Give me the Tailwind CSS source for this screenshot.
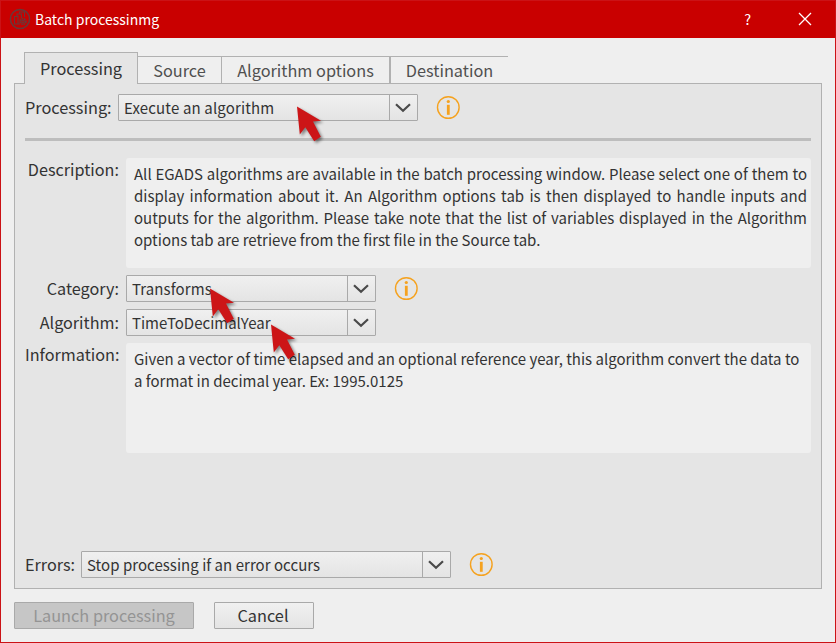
<!DOCTYPE html>
<html lang="en">
<head>
<meta charset="utf-8">
<title>Batch processinmg</title>
<script src="https://cdn.jsdelivr.net/npm/@tailwindcss/browser@4"></script>
</head>
<body class="w-[836px] h-[643px] overflow-hidden font-['Noto_Sans_CJK_SC','Noto_Sans',sans-serif] text-[#333]">
<svg class="hidden">
  <symbol id="chev" viewBox="0 0 16 10"><path d="M1 1.200 L8 7.800 L15 1.200" fill="none" stroke="#4a4a4a" stroke-width="2.200"/></symbol>
  <symbol id="info" viewBox="0 0 24 24"><circle cx="12.300" cy="11.500" r="10.800" fill="none" stroke="#f5a21f" stroke-width="1.400"/><rect x="10.900" y="8.800" width="2.800" height="10" fill="#f5a21f"/><circle cx="12.300" cy="5.500" r="1.600" fill="#f5a21f"/></symbol>
  <symbol id="ptr" viewBox="0 0 34 42"><path d="M1 0.500 L25 14.800 L17 15.600 L24.800 30.800 L18.200 35.300 L9.300 21.300 L3.800 28.500 Z" fill="#cc1517"/></symbol>
</svg>
<div class="relative w-[836px] h-[643px] flex flex-col bg-[#efefef] border border-[#cb1216]">
  <header class="h-[37px] shrink-0 bg-[#c90000] flex items-center text-white pl-[8px] pr-[23px] pb-[1px]">
    <svg class="w-[22px] h-[22px]" viewBox="0 0 22 22" fill="none" stroke="#663a3a" stroke-width="1.100"><circle cx="11" cy="11" r="9.600" stroke-width="1.500"/><path d="M11 16H5.500V8.500H9V16M8 8V6H12.500V10M10.500 5.500V4H15.500V9"/><circle cx="14" cy="13.500" r="2.800" stroke-width="1.800" stroke-dasharray="1.600 .7"/><circle cx="14" cy="13.500" r="1.200"/></svg>
    <span class="ml-[4px] text-[14px] leading-[20px]">Batch processinmg</span>
    <span class="ml-auto text-[14.500px] leading-[20px]">?</span>
    <svg class="ml-[47px] w-[14px] h-[14px]" viewBox="0 0 14 14" fill="none" stroke="#fff" stroke-width="1.300"><path d="M1 1 L13 13 M13 1 L1 13"/></svg>
  </header>
  <nav class="h-[46px] shrink-0 pl-[23px] pt-[14px] flex items-end text-[16.300px] leading-[24px] text-[#505050] relative z-10">
    <div class="w-[114px] h-[32px] bg-[#e5e5e5] border border-b-0 border-[#b1b1b1] flex justify-center items-center text-[#333] pb-[1px]">Processing</div>
    <div class="w-[84px] h-[28px] border-t border-r border-[#b1b1b1] flex justify-center items-center pb-[1px]">Source</div>
    <div class="w-[169px] h-[28px] border-t border-r-2 border-[#b1b1b1] flex justify-center items-center pb-[1px]">Algorithm options</div>
    <div class="w-[117px] h-[28px] border-t border-[#b1b1b1] flex justify-center items-center pb-[1px]">Destination</div>
  </nav>
  <main class="-mt-px ml-[13px] w-[808px] h-[506px] shrink-0 bg-[#e5e5e5] border border-[#b1b1b1] px-[10px] pt-[10px] flex flex-col">
    <div class="flex items-center h-[27px] shrink-0">
      <span class="w-[93px] text-[16.300px] leading-[27px] whitespace-nowrap">Processing:</span>
      <div class="w-[300px] h-[27px] border border-[#a9a9a9] rounded-[1px] bg-linear-to-b from-[#f0f0f0] to-[#e4e4e4] flex">
        <span class="flex-1 pl-[5px] text-[15px] leading-[26px] tracking-[0.150px]">Execute an algorithm</span>
        <span class="w-[28px] border-l border-[#a9a9a9] flex items-center justify-center pr-[2px]"><svg class="w-[16px] h-[10px] shrink-0"><use href="#chev"/></svg></span>
      </div>
      <svg class="ml-[18px] w-[24px] h-[24px]"><use href="#info"/></svg>
    </div>
    <div class="mt-[17px] h-[3px] w-[786px] shrink-0 bg-[#bdbdbd]"></div>
    <div class="mt-[17px] flex h-[110px] shrink-0">
      <span class="w-[94px] text-right text-[16.200px] leading-[23px] mr-[7px] whitespace-nowrap">Description:</span>
      <div class="w-[685px] bg-[#efefef] rounded-[3px] pl-[8px] pr-[4px] pt-[5px] text-[15px] leading-[22px] whitespace-nowrap">
        <div class="[text-align-last:justify]">All EGADS algorithms are available in the batch processing window. Please select one of them to</div>
        <div class="[text-align-last:justify]">display information about it. An Algorithm options tab is then displayed to handle inputs and</div>
        <div class="[text-align-last:justify]">outputs for the algorithm. Please take note that the list of variables displayed in the Algorithm</div>
        <div>options tab are retrieve from the first file in the Source tab.</div>
      </div>
    </div>
    <div class="mt-[7px] flex items-center h-[27px] shrink-0">
      <span class="w-[94px] text-right text-[16.200px] leading-[27px] mr-[7px] whitespace-nowrap">Category:</span>
      <div class="w-[250px] h-[27px] border border-[#a9a9a9] rounded-[1px] bg-linear-to-b from-[#f0f0f0] to-[#e4e4e4] flex">
        <span class="flex-1 pl-[5px] text-[15px] leading-[26px] tracking-[0.100px]">Transforms</span>
        <span class="w-[28px] border-l border-[#a9a9a9] flex items-center justify-center pr-[2px]"><svg class="w-[16px] h-[10px] shrink-0"><use href="#chev"/></svg></span>
      </div>
      <svg class="ml-[18px] w-[24px] h-[24px]"><use href="#info"/></svg>
    </div>
    <div class="mt-[7px] flex items-center h-[27px] shrink-0">
      <span class="w-[94px] text-right text-[16.200px] leading-[27px] mr-[7px] whitespace-nowrap">Algorithm:</span>
      <div class="w-[250px] h-[27px] border border-[#a9a9a9] rounded-[1px] bg-linear-to-b from-[#f0f0f0] to-[#e4e4e4] flex">
        <span class="flex-1 pl-[5px] text-[15px] leading-[26px]">TimeToDecimalYear</span>
        <span class="w-[28px] border-l border-[#a9a9a9] flex items-center justify-center pr-[2px]"><svg class="w-[16px] h-[10px] shrink-0"><use href="#chev"/></svg></span>
      </div>
    </div>
    <div class="mt-[7px] flex h-[110px] shrink-0">
      <span class="w-[94px] text-right text-[16.200px] leading-[23px] mr-[7px] whitespace-nowrap">Information:</span>
      <div class="w-[685px] bg-[#efefef] rounded-[3px] pl-[8px] pt-[5px] text-[15px] leading-[22px] whitespace-nowrap">
        <div>Given a vector of time elapsed and an optional reference year, this algorithm convert the data to</div>
        <div>a format in decimal year. Ex: 1995.0125</div>
      </div>
    </div>
    <div class="mt-auto mb-[10px] flex items-center h-[27px] shrink-0">
      <span class="w-[56px] text-[16.200px] leading-[27px] whitespace-nowrap">Errors:</span>
      <div class="w-[370px] h-[27px] border border-[#a9a9a9] rounded-[1px] bg-linear-to-b from-[#f0f0f0] to-[#e4e4e4] flex">
        <span class="flex-1 pl-[5px] text-[15px] leading-[26px] tracking-[0.040px]">Stop processing if an error occurs</span>
        <span class="w-[28px] border-l border-[#a9a9a9] flex items-center justify-center pr-[2px]"><svg class="w-[16px] h-[10px] shrink-0"><use href="#chev"/></svg></span>
      </div>
      <svg class="ml-[18px] w-[24px] h-[24px]"><use href="#info"/></svg>
    </div>
  </main>
  <footer class="mt-[13px] ml-[13px] flex gap-[20px] text-[16.300px] leading-[25px] text-center">
    <div class="w-[180px] h-[27px] border border-[#a9a9a9] rounded-[1px] bg-[#c6c6c6] text-[#949494]">Launch processing</div>
    <div class="w-[100px] h-[27px] border border-[#a9a9a9] rounded-[1px] bg-linear-to-b from-[#f0f0f0] to-[#e4e4e4] pr-[2px]">Cancel</div>
  </footer>
  <svg class="absolute z-20 left-[295px] top-[105px] w-[34px] h-[42px] drop-shadow-[2px_2px_1.500px_rgba(0,0,0,0.45)]"><use href="#ptr"/></svg>
  <svg class="absolute z-20 left-[208px] top-[287px] w-[34px] h-[42px] drop-shadow-[2px_2px_1.500px_rgba(0,0,0,0.45)]"><use href="#ptr"/></svg>
  <svg class="absolute z-20 left-[269px] top-[323px] w-[34px] h-[42px] drop-shadow-[2px_2px_1.500px_rgba(0,0,0,0.45)]"><use href="#ptr"/></svg>
</div>
</body>
</html>
